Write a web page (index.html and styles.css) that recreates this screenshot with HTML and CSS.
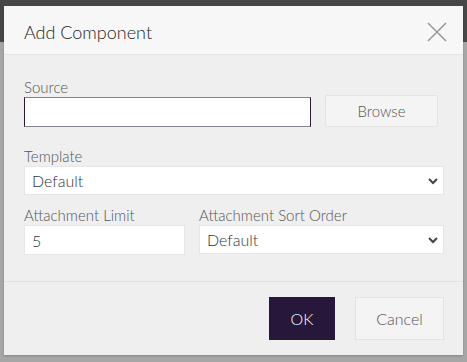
FILE: index.html
```html
<!DOCTYPE html>
<html lang="en">
<head>
    <meta charset="UTF-8">
    <title>Add Component</title>
    <link rel="stylesheet" href="styles.css">
</head>
<body>
    <div class="dialog">
        <div class="dialog-header">
            <h1 class="dialog-title">Add Component</h1>
            <button class="close-btn" aria-label="Close">
                <svg width="20" height="20" viewBox="0 0 20 20">
                    <path d="M1 1 L19 19 M19 1 L1 19" stroke="#9a9a9a" stroke-width="1.6" fill="none"/>
                </svg>
            </button>
        </div>
        <div class="dialog-body">
            <div class="field source-field">
                <label class="label">Source</label>
                <div class="source-row">
                    <input class="input source-input" type="text">
                    <button class="btn btn-light browse-btn">Browse</button>
                </div>
            </div>
            <div class="field">
                <label class="label">Template</label>
                <div class="select-wrap">
                    <select class="input select"><option>Default</option></select>
                    <svg class="chevron" width="10" height="7" viewBox="0 0 10 7"><path d="M1 1 L5 5 L9 1" stroke="#444" stroke-width="2" fill="none"/></svg>
                </div>
            </div>
            <div class="field-row">
                <div class="field limit-field">
                    <label class="label">Attachment Limit</label>
                    <input class="input" type="text" value="5">
                </div>
                <div class="field sort-field">
                    <label class="label">Attachment Sort Order</label>
                    <div class="select-wrap">
                        <select class="input select"><option>Default</option></select>
                        <svg class="chevron" width="10" height="7" viewBox="0 0 10 7"><path d="M1 1 L5 5 L9 1" stroke="#444" stroke-width="2" fill="none"/></svg>
                    </div>
                </div>
            </div>
        </div>
        <div class="dialog-footer">
            <button class="btn btn-primary">OK</button>
            <button class="btn btn-light cancel-btn">Cancel</button>
        </div>
    </div>
</body>
</html>
```

FILE: styles.css
```css
body {
    margin: 0;
    height: 362px;
    overflow: hidden;
    background: linear-gradient(#474747 0, #474747 42px, #a6a6a6 42px);
    font-family: Lato, 'Open Sans', sans-serif;
    font-weight: 300;
    padding: 6px 4px 0 4px;
    box-sizing: border-box;
}
.dialog {
    width: 459px;
    height: 349px;
    background-color: #efefef;
    display: flex;
    flex-direction: column;
    box-shadow: 0 1px 2px rgba(0, 0, 0, 0.2);
}
.dialog-header {
    height: 48px;
    background-color: #f7f7f7;
    border-bottom: 1px solid #e4e4e4;
    display: flex;
    align-items: center;
    justify-content: space-between;
    padding: 0 16px 0 20px;
}
.dialog-title {
    margin: 0;
    font-size: 18px;
    font-weight: 300;
    color: #1e1e1e;
    padding-top: 4px;
}
.close-btn {
    background: none;
    border: none;
    padding: 0;
    width: 20px;
    height: 20px;
    cursor: pointer;
    margin-top: 4px;
}
.dialog-body {
    padding: 22px 19px 0 20px;
    height: 204px;
    border-bottom: 1px solid #e2e2e2;
}
.field {
    display: flex;
    flex-direction: column;
    margin-bottom: 10px;
}
.source-field {
    margin-bottom: 19px;
}
.label {
    font-size: 15px;
    line-height: 20px;
    color: #555;
}
.source-row {
    display: flex;
    gap: 14px;
    align-items: flex-start;
    height: 30px;
}
.input {
    height: 30px;
    box-sizing: border-box;
    border: 1px solid #e6e6e6;
    background-color: #fff;
    font-family: Lato, 'Open Sans', sans-serif;
    font-weight: 300;
    font-size: 16px;
    color: #333;
    padding: 0 7px;
    outline: none;
    width: 100%;
}
.source-input {
    width: 287px;
    flex: none;
    border-color: #8a8093 #2b1b38;
}
.btn {
    font-family: Lato, 'Open Sans', sans-serif;
    font-weight: 300;
    font-size: 15px;
    cursor: pointer;
    box-sizing: border-box;
}
.btn-light {
    background-color: #f4f4f4;
    border: 1px solid #e3e3e3;
    color: #555;
}
.browse-btn {
    width: 113px;
    height: 32px;
    border-radius: 2px;
    margin-top: -2px;
}
.select-wrap {
    position: relative;
}
.select {
    appearance: none;
    -webkit-appearance: none;
    height: 29px;
}
.chevron {
    position: absolute;
    right: 6px;
    top: 12px;
    pointer-events: none;
}
.field-row {
    display: flex;
    gap: 14px;
}
.limit-field {
    width: 161px;
}
.sort-field {
    flex: 1;
}
.dialog-footer {
    display: flex;
    justify-content: flex-end;
    gap: 20px;
    padding: 15px 19px 0 0;
}
.btn-primary {
    width: 66px;
    height: 43px;
    border: none;
    background-color: #27173a;
    color: #fff;
    font-size: 16px;
}
.cancel-btn {
    width: 89px;
    height: 43px;
    font-size: 16px;
}
```
